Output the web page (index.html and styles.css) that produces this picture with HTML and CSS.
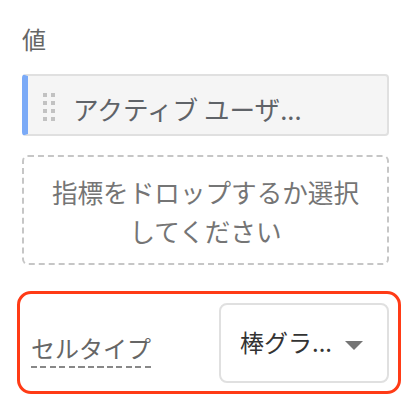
FILE: index.html
```html
<!DOCTYPE html>
<html lang="ja">
<head>
<meta charset="utf-8">
<link rel="stylesheet" href="styles.css">
</head>
<body>
<div class="panel">
  <div class="label">値</div>
  <div class="chip">
    <span class="handle"><i></i><i></i><i></i><i></i><i></i><i></i><i></i><i></i></span>
    <span class="chip-text">アクティブ ユーザ...</span>
  </div>
  <div class="dropzone">指標をドロップするか選択<br>してください</div>
  <div class="row">
    <span class="row-label">セルタイプ</span>
    <div class="select">
      <span class="select-text">棒グラ...</span>
      <span class="caret"></span>
    </div>
  </div>
</div>
</body>
</html>
```
FILE: styles.css
```css
html, body {
  margin: 0;
  padding: 0;
  background: #fff;
}
body {
  font-family: "Noto Sans CJK JP", "Noto Sans", sans-serif;
  font-size: 24px;
}
.panel {
  padding: 23px 31px 0 22px;
}
.label {
  line-height: 32px;
  color: #666;
}
.chip {
  margin-top: 19px;
  height: 62px;
  box-sizing: border-box;
  border: 2px solid #e0e0e0;
  border-left: 6px solid #7baaf7;
  border-radius: 4px;
  background: #f5f5f5;
  display: flex;
  align-items: center;
  padding-left: 15px;
}
.handle {
  display: grid;
  grid-template-columns: 4px 4px;
  grid-auto-rows: 4px;
  column-gap: 4px;
  row-gap: 4px;
  margin-top: 3px;
}
.handle i {
  background: #c2c2c2;
}
.chip-text {
  margin-left: 18px;
  margin-top: 8px;
  color: #5f6368;
  font-size: 25.6px;
  line-height: 32px;
}
.dropzone {
  margin-top: 19px;
  height: 110px;
  box-sizing: border-box;
  border: 2px dashed #c6c6c6;
  border-radius: 6px;
  display: flex;
  align-items: center;
  justify-content: center;
  text-align: center;
  font-size: 25.6px;
  line-height: 39px;
  color: #757575;
  padding-top: 2px;
}
.row {
  margin: 26px -12px 0 -5px;
  height: 103px;
  box-sizing: border-box;
  border: 3px solid #ff3b16;
  border-radius: 14px;
  display: flex;
  align-items: center;
  justify-content: space-between;
  padding: 0 9px 0 11px;
}
.row-label {
  color: #666;
  line-height: 30px;
  padding-bottom: 5px;
  margin-top: 16px;
  background: repeating-linear-gradient(to right, #888 0 6px, transparent 6px 9.5px) left bottom / 100% 2px no-repeat;
}
.select {
  width: 170px;
  height: 80px;
  box-sizing: border-box;
  border: 2px solid #e0e0e0;
  border-radius: 8px;
  display: flex;
  align-items: center;
  padding-left: 19px;
  margin-top: 1px;
}
.select-text {
  color: #333;
  line-height: 32px;
  margin-top: -2px;
}
.caret {
  width: 0;
  height: 0;
  border-left: 9px solid transparent;
  border-right: 9px solid transparent;
  border-top: 9px solid #757575;
  margin-left: 13px;
  margin-top: 4px;
}
```
